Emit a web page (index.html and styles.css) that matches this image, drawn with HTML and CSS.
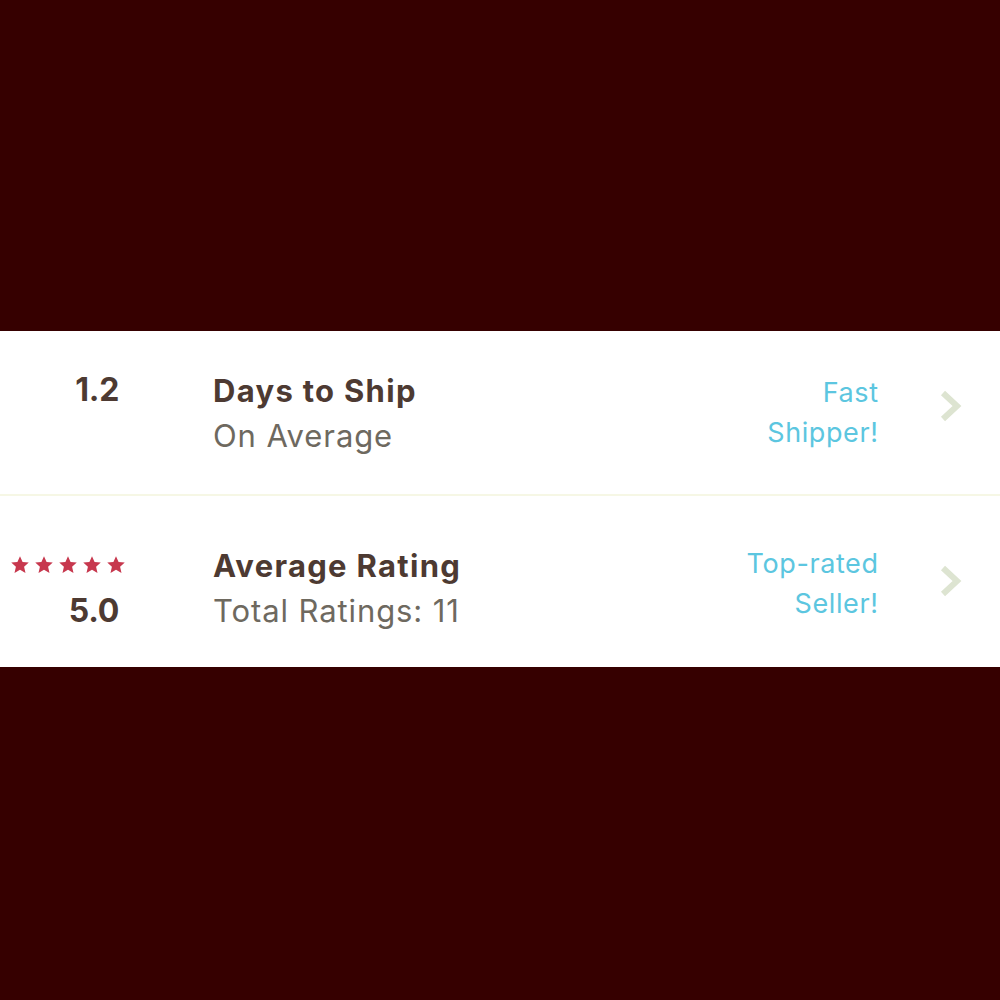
FILE: index.html
```html
<!DOCTYPE html>
<html>
<head>
<meta charset="utf-8">
<link rel="stylesheet" href="styles.css">
</head>
<body>
<div class="page">
  <section class="panel">
    <div class="row row-ship">
      <div class="left">
        <div class="num">1.2</div>
      </div>
      <div class="mid">
        <div class="title">Days to Ship</div>
        <div class="sub">On Average</div>
      </div>
      <div class="badge">Fast<br>Shipper!</div>
      <div class="chev-wrap">
        <svg class="chev" width="24" height="34" viewBox="0 0 24 34"><polyline points="4,4 18,17 4,30" fill="none" stroke="#dde4d1" stroke-width="6"/></svg>
      </div>
    </div>
    <div class="row row-rating">
      <div class="left">
        <div class="stars">
          <svg class="star" viewBox="0 0 24 24"><path d="M12 1.5l3.1 6.9 7.4.7-5.6 5 1.7 7.4L12 17.6l-6.6 3.9 1.7-7.4-5.6-5 7.4-.7z"/></svg>
          <svg class="star" viewBox="0 0 24 24"><path d="M12 1.5l3.1 6.9 7.4.7-5.6 5 1.7 7.4L12 17.6l-6.6 3.9 1.7-7.4-5.6-5 7.4-.7z"/></svg>
          <svg class="star" viewBox="0 0 24 24"><path d="M12 1.5l3.1 6.9 7.4.7-5.6 5 1.7 7.4L12 17.6l-6.6 3.9 1.7-7.4-5.6-5 7.4-.7z"/></svg>
          <svg class="star" viewBox="0 0 24 24"><path d="M12 1.5l3.1 6.9 7.4.7-5.6 5 1.7 7.4L12 17.6l-6.6 3.9 1.7-7.4-5.6-5 7.4-.7z"/></svg>
          <svg class="star" viewBox="0 0 24 24"><path d="M12 1.5l3.1 6.9 7.4.7-5.6 5 1.7 7.4L12 17.6l-6.6 3.9 1.7-7.4-5.6-5 7.4-.7z"/></svg>
        </div>
        <div class="num">5.0</div>
      </div>
      <div class="mid">
        <div class="title">Average Rating</div>
        <div class="sub">Total Ratings: 11</div>
      </div>
      <div class="badge">Top-rated<br>Seller!</div>
      <div class="chev-wrap">
        <svg class="chev" width="24" height="34" viewBox="0 0 24 34"><polyline points="4,4 18,17 4,30" fill="none" stroke="#dde4d1" stroke-width="6"/></svg>
      </div>
    </div>
  </section>
</div>
</body>
</html>
```

FILE: styles.css
```css
html, body {
  margin: 0;
  padding: 0;
}
body {
  background: #360000;
  width: 1000px;
  height: 1000px;
  overflow: hidden;
  font-family: Inter, Lato, "Liberation Sans", sans-serif;
}
.page {
  padding-top: 331px;
}
.panel {
  background: #ffffff;
}
.row {
  display: flex;
  align-items: center;
  box-sizing: border-box;
}
.row-ship {
  height: 165px;
  border-bottom: 2px solid #f6f7e5;
}
.row-rating {
  height: 171px;
  padding-top: 13px;
}
.left {
  width: 126px;
  align-self: flex-start;
  text-align: right;
}
.row-ship .left {
  padding-top: 36px;
}
.row-rating .left {
  padding-top: 33px;
}
.num {
  font-weight: 700;
  font-size: 32px;
  line-height: 45px;
  color: #4d3a32;
  padding-right: 7px;
  letter-spacing: -0.3px;
}
.stars {
  height: 46px;
  display: flex;
  align-items: center;
  justify-content: flex-end;
  gap: 4px;
}
.star {
  width: 20px;
  height: 20px;
  fill: #c7384e;
}
.mid {
  margin-left: 87px;
  flex: 1;
}
.title {
  font-weight: 700;
  font-size: 31px;
  line-height: 45px;
  color: #4d3a32;
  letter-spacing: 1.3px;
}
.sub {
  font-size: 31px;
  line-height: 45px;
  color: #6e695f;
  letter-spacing: 0.9px;
}
.badge {
  text-align: right;
  font-size: 27px;
  line-height: 40px;
  color: #5cc6e0;
  letter-spacing: 0.6px;
  margin-right: -0.6px;
}
.row-rating .badge {
  margin-bottom: 8px;
}
.chev-wrap {
  width: 122px;
  padding-left: 61px;
  box-sizing: border-box;
  margin-bottom: 14px;
}
.chev {
  display: block;
}
```
